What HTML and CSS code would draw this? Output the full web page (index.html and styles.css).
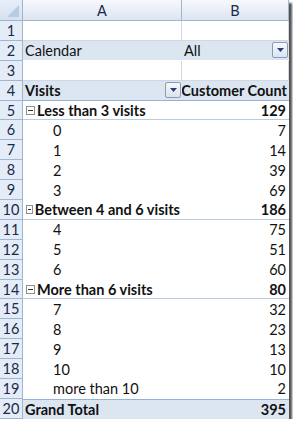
FILE: index.html
```html
<!DOCTYPE html>
<html>
<head>
<meta charset="utf-8">
<link rel="stylesheet" href="styles.css">
</head>
<body>
<div class="frame">
  <div class="sheet">
    <!-- column headers -->
    <div class="corner"><span class="corner-tri"></span></div>
    <div class="colhead">A</div>
    <div class="colhead">B</div>

    <div class="rowhead">1</div><div class="cell grid"></div><div class="cell grid"></div>

    <div class="rowhead">2</div>
    <div class="cell filter">Calendar</div>
    <div class="cell filter">All<span class="dd"><svg width="7" height="4" viewBox="0 0 7 4"><path d="M0 0H7L3.5 4Z" fill="#2a3f7a"/></svg></span></div>

    <div class="rowhead">3</div><div class="cell grid"></div><div class="cell grid"></div>

    <div class="rowhead">4</div>
    <div class="cell head b">Visits<span class="dd"><svg width="7" height="4" viewBox="0 0 7 4"><path d="M0 0H7L3.5 4Z" fill="#2a3f7a"/></svg></span></div>
    <div class="cell head b num-head">Customer Count</div>

    <div class="rowhead">5</div>
    <div class="cell group b"><span class="minus"></span>Less than 3 visits</div>
    <div class="cell group b num">129</div>
    <div class="rowhead">6</div><div class="cell item">0</div><div class="cell num">7</div>
    <div class="rowhead">7</div><div class="cell item">1</div><div class="cell num">14</div>
    <div class="rowhead">8</div><div class="cell item">2</div><div class="cell num">39</div>
    <div class="rowhead">9</div><div class="cell item">3</div><div class="cell num">69</div>

    <div class="rowhead">10</div>
    <div class="cell group b"><span class="minus"></span>Between 4 and 6 visits</div>
    <div class="cell group b num">186</div>
    <div class="rowhead">11</div><div class="cell item">4</div><div class="cell num">75</div>
    <div class="rowhead">12</div><div class="cell item">5</div><div class="cell num">51</div>
    <div class="rowhead">13</div><div class="cell item">6</div><div class="cell num">60</div>

    <div class="rowhead">14</div>
    <div class="cell group b"><span class="minus"></span>More than 6 visits</div>
    <div class="cell group b num">80</div>
    <div class="rowhead">15</div><div class="cell item">7</div><div class="cell num">32</div>
    <div class="rowhead">16</div><div class="cell item">8</div><div class="cell num">23</div>
    <div class="rowhead">17</div><div class="cell item">9</div><div class="cell num">13</div>
    <div class="rowhead">18</div><div class="cell item">10</div><div class="cell num">10</div>
    <div class="rowhead">19</div><div class="cell item">more than 10</div><div class="cell num">2</div>

    <div class="rowhead">20</div>
    <div class="cell total b">Grand Total</div>
    <div class="cell total b num">395</div>
  </div>
</div>
</body>
</html>
```
FILE: styles.css
```css
html, body {
  margin: 0;
  padding: 0;
  background: #ffffff;
}

.frame {
  width: 289px;
  box-shadow: 3px 3px 2px 0 rgba(50, 50, 50, 0.85);
}

.sheet {
  display: grid;
  grid-template-columns: 23px 159px 107px;
  grid-template-rows: 21px;
  grid-auto-rows: 19.9px;
  font-family: Lato, "Liberation Sans", sans-serif;
  font-size: 14.5px;
  color: #111111;
  background: #ffffff;
}

.sheet > div {
  box-sizing: border-box;
  display: flex;
  align-items: center;
  white-space: nowrap;
  overflow: hidden;
}

/* headers */
.corner {
  position: relative;
  background: linear-gradient(#e7eef8, #d6e1f0);
  border-right: 1px solid #9eb6ce;
  border-bottom: 1px solid #9eb6ce;
}
.corner-tri {
  position: absolute;
  right: 3px;
  bottom: 3px;
  width: 0;
  height: 0;
  border-left: 12px solid transparent;
  border-bottom: 12px solid #b9cbe2;
}

.colhead {
  justify-content: center;
  background: linear-gradient(#f6f8fc, #dde5f1);
  border-right: 1px solid #9eb6ce;
  border-bottom: 1px solid #9eb6ce;
  color: #1b2a48;
}

.rowhead {
  justify-content: center;
  background: #e4ecf7;
  border-right: 1px solid #9eb6ce;
  border-bottom: 1px solid #9eb6ce;
  color: #1b2a48;
}

/* cells */
.cell {
  padding: 0 2px;
}
.cell.grid {
  border-right: 1px solid #d0d7e5;
  border-bottom: 1px solid #d0d7e5;
}
.b {
  font-weight: 700;
}

.filter {
  background: #dce6f1;
  border-bottom: 1px solid #ffffff;
  justify-content: space-between;
}

.head {
  background: #dce6f1;
  border-bottom: 1px solid #95b3d7;
  justify-content: space-between;
}
.num-head {
  justify-content: flex-end;
}

.group {
  border-bottom: 1px solid #b8cce4;
}
.item {
  padding-left: 30px;
}
.num {
  justify-content: flex-end;
  padding-right: 3px;
}

.total {
  background: #dce6f1;
  border-top: 1px solid #95b3d7;
}

/* pivot dropdown button */
.dd {
  box-sizing: border-box;
  width: 16px;
  height: 16px;
  display: flex;
  align-items: center;
  justify-content: center;
  border: 1px solid #8a9bb5;
  border-radius: 2px;
  background: linear-gradient(#f7f9fc, #dbe3ee);
  margin-right: -1px;
}

/* collapse box */
.minus {
  position: relative;
  box-sizing: border-box;
  width: 9px;
  height: 9px;
  border: 1px solid #8f8f8f;
  background: #ffffff;
  margin-right: 2px;
  margin-left: 1px;
}
.minus::after {
  content: "";
  position: absolute;
  left: 1px;
  right: 1px;
  top: 3px;
  height: 1px;
  background: #333333;
}
```
